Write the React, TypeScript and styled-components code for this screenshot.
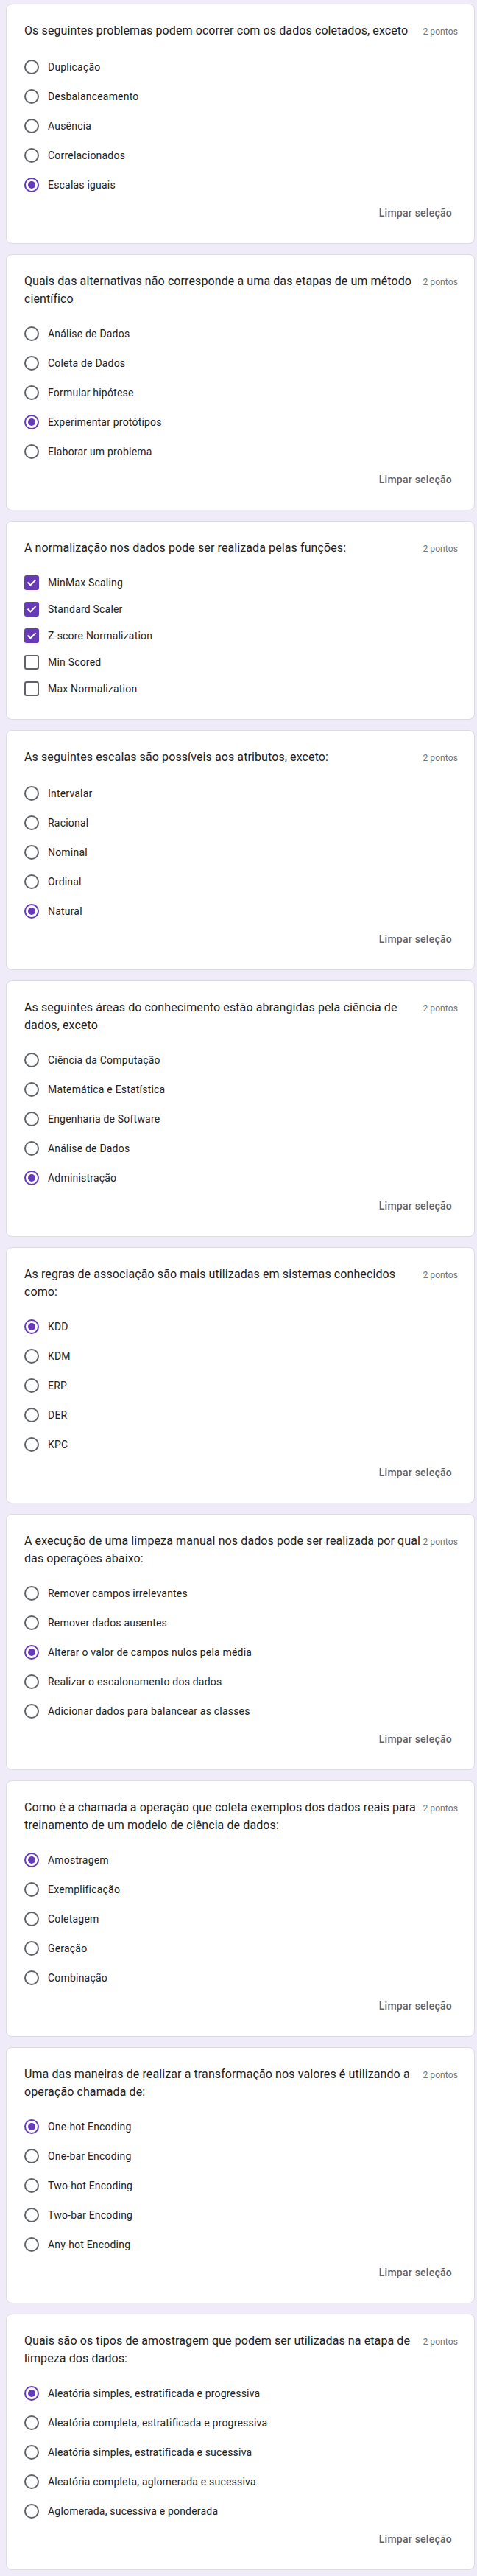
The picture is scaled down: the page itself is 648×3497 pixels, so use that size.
import React from "react";
import styled, { createGlobalStyle } from "styled-components";

const GlobalStyle = createGlobalStyle`
  html, body {
    margin: 0;
    padding: 0;
    background: #f0ebf8;
  }
  body {
    font-family: Roboto, "Noto Sans", Arial, sans-serif;
    -webkit-font-smoothing: antialiased;
  }
  * { box-sizing: border-box; }
`;

const Page = styled.main`
  display: flex;
  flex-direction: column;
  gap: 14px;
  padding: 5px 3px 8px 8px;
  background: #f0ebf8;
  min-height: 3497px;
`;

const Card = styled.section`
  background: #fff;
  border: 1px solid #dadce0;
  border-radius: 8px;
  padding: 24px 22px 0 24px;
  display: flex;
  flex-direction: column;
`;

const Header = styled.div`
  display: flex;
  align-items: flex-start;
  min-height: 26px;
`;

const Title = styled.div`
  flex: 1;
  min-width: 0;
  font-size: 16px;
  line-height: 24px;
  letter-spacing: 0.1px;
  color: #202124;
  font-weight: 400;
`;

const Points = styled.div`
  flex: none;
  margin-left: 0;
  font-size: 12px;
  line-height: 26px;
  letter-spacing: 0.1px;
  color: #70757a;
`;

const OptionList = styled.div`
  display: flex;
  flex-direction: column;
  margin-top: 15px;
`;

const OptionRow = styled.label<{ $h: number }>`
  display: flex;
  align-items: center;
  gap: 12px;
  height: ${(p) => p.$h}px;
  font-size: 14px;
  letter-spacing: 0.2px;
  color: #202124;
`;

const RadioCircle = styled.span<{ $on: boolean }>`
  flex: none;
  width: 20px;
  height: 20px;
  border-radius: 50%;
  border: 2px solid ${(p) => (p.$on ? "#673ab7" : "#5f6368")};
  display: flex;
  align-items: center;
  justify-content: center;
  &::after {
    content: "";
    width: 10px;
    height: 10px;
    border-radius: 50%;
    background: #673ab7;
    display: ${(p) => (p.$on ? "block" : "none")};
  }
`;

const CheckSquare = styled.span<{ $on: boolean }>`
  flex: none;
  width: 20px;
  height: 20px;
  border-radius: 3px;
  border: 2px solid ${(p) => (p.$on ? "#673ab7" : "#5f6368")};
  background: ${(p) => (p.$on ? "#673ab7" : "#fff")};
  display: flex;
  align-items: center;
  justify-content: center;
`;

const Footer = styled.div`
  display: flex;
  justify-content: flex-end;
  padding: 8px 0 7px;
`;

const ClearButton = styled.span`
  margin-right: 8px;
  font-size: 14px;
  line-height: 20px;
  font-weight: 500;
  letter-spacing: 0.25px;
  color: #5f6368;
`;

const CardEnd = styled.div<{ $h: number }>`
  height: ${(p) => p.$h}px;
`;

type Q = {
  title: string;
  options: string[];
  selected: number[];
  multi?: boolean;
};

const questions: Q[] = [
  {
    title: "Os seguintes problemas podem ocorrer com os dados coletados, exceto",
    options: ["Duplicação", "Desbalanceamento", "Ausência", "Correlacionados", "Escalas iguais"],
    selected: [4],
  },
  {
    title: "Quais das alternativas não corresponde a uma das etapas de um método científico",
    options: ["Análise de Dados", "Coleta de Dados", "Formular hipótese", "Experimentar protótipos", "Elaborar um problema"],
    selected: [3],
  },
  {
    title: "A normalização nos dados pode ser realizada pelas funções:",
    options: ["MinMax Scaling", "Standard Scaler", "Z-score Normalization", "Min Scored", "Max Normalization"],
    selected: [0, 1, 2],
    multi: true,
  },
  {
    title: "As seguintes escalas são possíveis aos atributos, exceto:",
    options: ["Intervalar", "Racional", "Nominal", "Ordinal", "Natural"],
    selected: [4],
  },
  {
    title: "As seguintes áreas do conhecimento estão abrangidas pela ciência de dados, exceto",
    options: ["Ciência da Computação", "Matemática e Estatística", "Engenharia de Software", "Análise de Dados", "Administração"],
    selected: [4],
  },
  {
    title: "As regras de associação são mais utilizadas em sistemas conhecidos como:",
    options: ["KDD", "KDM", "ERP", "DER", "KPC"],
    selected: [0],
  },
  {
    title: "A execução de uma limpeza manual nos dados pode ser realizada por qual das operações abaixo:",
    options: [
      "Remover campos irrelevantes",
      "Remover dados ausentes",
      "Alterar o valor de campos nulos pela média",
      "Realizar o escalonamento dos dados",
      "Adicionar dados para balancear as classes",
    ],
    selected: [2],
  },
  {
    title: "Como é a chamada a operação que coleta exemplos dos dados reais para treinamento de um modelo de ciência de dados:",
    options: ["Amostragem", "Exemplificação", "Coletagem", "Geração", "Combinação"],
    selected: [0],
  },
  {
    title: "Uma das maneiras de realizar a transformação nos valores é utilizando a operação chamada de:",
    options: ["One-hot Encoding", "One-bar Encoding", "Two-hot Encoding", "Two-bar Encoding", "Any-hot Encoding"],
    selected: [0],
  },
  {
    title: "Quais são os tipos de amostragem que podem ser utilizadas na etapa de limpeza dos dados:",
    options: [
      "Aleatória simples, estratificada e progressiva",
      "Aleatória completa, estratificada e progressiva",
      "Aleatória simples, estratificada e sucessiva",
      "Aleatória completa, aglomerada e sucessiva",
      "Aglomerada, sucessiva e ponderada",
    ],
    selected: [0],
  },
];

const CheckMark = () => (
  <svg width="16" height="16" viewBox="0 0 16 16" aria-hidden="true">
    <path d="M3.2 8.3 L6.4 11.4 L12.8 4.8" fill="none" stroke="#fff" strokeWidth="2" strokeLinecap="square" />
  </svg>
);

const Question = ({ q }: { q: Q }) => (
  <Card>
    <Header>
      <Title>{q.title}</Title>
      <Points>2 pontos</Points>
    </Header>
    <OptionList>
      {q.options.map((o, i) => {
        const on = q.selected.includes(i);
        return (
          <OptionRow key={o} $h={q.multi ? 36 : 40}>
            {q.multi ? (
              <CheckSquare $on={on}>{on && <CheckMark />}</CheckSquare>
            ) : (
              <RadioCircle $on={on} />
            )}
            <span>{o}</span>
          </OptionRow>
        );
      })}
    </OptionList>
    {q.multi ? (
      <CardEnd $h={23} />
    ) : (
      <>
        <Footer>
          <ClearButton>Limpar seleção</ClearButton>
        </Footer>
        <CardEnd $h={24} />
      </>
    )}
  </Card>
);

export default function App() {
  return (
    <>
      <GlobalStyle />
      <Page>
        {questions.map((q) => (
          <Question key={q.title} q={q} />
        ))}
      </Page>
    </>
  );
}
